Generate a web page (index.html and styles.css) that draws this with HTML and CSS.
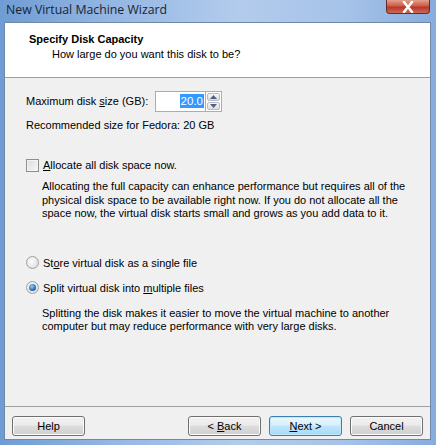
FILE: index.html
```html
<!DOCTYPE html>
<html>
<head>
<meta charset="utf-8">
<link rel="stylesheet" href="styles.css">
</head>
<body>
<div class="window">
  <div class="titlebar">
    <span class="title">New Virtual Machine Wizard</span>
    <span class="close"><svg width="16" height="12" viewBox="0 0 16 12"><path d="M4 1 L12 11 M12 1 L4 11" stroke="#fff" stroke-width="2.6" stroke-linecap="round"/></svg></span>
  </div>
  <div class="client">
    <div class="header">
      <div class="h-title">Specify Disk Capacity</div>
      <div class="h-sub">How large do you want this disk to be?</div>
    </div>
    <div class="content">
      <div class="size-row">
        <span class="label">Maximum disk <u>s</u>ize (GB):</span>
        <span class="spin">
          <span class="spin-input"><span class="sel">20.0</span></span>
          <span class="spin-btns">
            <span class="spin-btn"><svg width="7" height="4" viewBox="0 0 7 4"><path d="M0 4 L3.5 0 L7 4Z" fill="#4d6185"/></svg></span>
            <span class="spin-btn"><svg width="7" height="4" viewBox="0 0 7 4"><path d="M0 0 L3.5 4 L7 0Z" fill="#4d6185"/></svg></span>
          </span>
        </span>
      </div>
      <div class="rec">Recommended size for Fedora: 20 GB</div>
      <div class="option check-row">
        <span class="checkbox"></span>
        <span><u>A</u>llocate all disk space now.</span>
      </div>
      <p class="desc desc1">Allocating the full capacity can enhance performance but requires all of the physical disk space to be available right now. If you do not allocate all the space now, the virtual disk starts small and grows as you add data to it.</p>
      <div class="option radio-row r1">
        <span class="radio"></span>
        <span>St<u>o</u>re virtual disk as a single file</span>
      </div>
      <div class="option radio-row r2">
        <span class="radio on"><span class="dot"></span></span>
        <span>Split virtual disk into <u>m</u>ultiple files</span>
      </div>
      <p class="desc desc2">Splitting the disk makes it easier to move the virtual machine to another computer but may reduce performance with very large disks.</p>
    </div>
    <div class="footer">
      <button class="btn">Help</button>
      <span class="spacer"></span>
      <button class="btn">&lt; <u>B</u>ack</button>
      <button class="btn default"><u>N</u>ext &gt;</button>
      <button class="btn">Cancel</button>
    </div>
  </div>
</div>
</body>
</html>
```
FILE: styles.css
```css
* { box-sizing: border-box; }
html, body { margin: 0; padding: 0; }
body {
  width: 436px;
  height: 445px;
  overflow: hidden;
  font-family: "Liberation Sans", Arial, sans-serif;
  font-size: 11px;
  color: #000;
}
.window {
  width: 436px;
  height: 445px;
  display: flex;
  flex-direction: column;
  background: linear-gradient(to right, #6f9cd4 0%, #93b6e2 25%, #b3cced 55%, #a5c2e8 80%, #86acdd 100%);
}
.titlebar {
  height: 22px;
  display: flex;
  align-items: flex-start;
  padding-left: 6px;
}
.title {
  font-family: "Open Sans", "Noto Sans", sans-serif;
  font-size: 12.3px;
  line-height: 20px;
  color: #1a2433;
}
.close {
  margin-left: auto;
  margin-right: 6px;
  width: 44px;
  height: 14px;
  border: 1px solid #6a2a22;
  border-top: none;
  border-radius: 0 0 4px 4px;
  background: linear-gradient(to bottom, #e2a08e 0%, #cf5b47 45%, #b8362a 55%, #d06a52 100%);
  display: flex;
  align-items: center;
  justify-content: center;
}
.client {
  flex: 1;
  margin: 0 5px 5px 4px;
  border: 1px solid #6f8aa8;
  background: #f0f0f0;
  display: flex;
  flex-direction: column;
}
.header {
  height: 55px;
  background: #fff;
  border-bottom: 1px solid #a0a0a0;
  padding: 9px 0 0 24px;
}
.h-title {
  font-weight: bold;
  font-size: 11px;
  line-height: 14px;
}
.h-sub {
  padding-left: 23px;
  margin-top: 1px;
  line-height: 14px;
}
.content {
  flex: 1;
  padding: 12px 0 0 21px;
}
.size-row {
  display: flex;
  align-items: center;
  height: 22px;
}
.label { width: 129px; }
.spin {
  display: flex;
  height: 21px;
}
.spin-input {
  width: 50px;
  height: 21px;
  border: 1px solid #abadb3;
  border-right: none;
  background: #fff;
  display: flex;
  align-items: center;
  justify-content: flex-end;
  padding-right: 1px;
}
.sel {
  background: #3399ff;
  color: #fff;
  font-size: 11.5px;
  line-height: 14px;
  padding: 0 1px;
}
.spin-btns {
  width: 17px;
  height: 21px;
  border: 1px solid #abadb3;
  background: #fff;
  display: flex;
  flex-direction: column;
  padding: 1px;
  gap: 1px;
}
.spin-btn {
  flex: 1;
  border: 1px solid #b8bcc4;
  border-radius: 2px;
  background: linear-gradient(#f6f6f6, #dcdcdc);
  display: flex;
  align-items: center;
  justify-content: center;
}
.rec {
  margin-top: 6px;
  line-height: 14px;
}
.option {
  display: flex;
  align-items: center;
  gap: 4px;
  line-height: 14px;
}
.check-row { margin-top: 26px; }
.checkbox {
  width: 13px;
  height: 13px;
  border: 1px solid #8f8f8f;
  background: linear-gradient(135deg, #dcdcdc, #f8f8f8);
  box-shadow: inset 0 0 0 1px #f4f4f4;
}
.desc {
  margin: 8px 0 0 16px;
  line-height: 13.5px;
  width: 370px;
}
.r1 { margin-top: 35px; }
.r2 { margin-top: 11px; }
.radio {
  width: 13px;
  height: 13px;
  border-radius: 50%;
  border: 1px solid #a0a0a0;
  background: radial-gradient(circle at 40% 40%, #fdfdfd, #d6d6d6);
  display: flex;
  align-items: center;
  justify-content: center;
}
.dot {
  width: 7px;
  height: 7px;
  border-radius: 50%;
  background: radial-gradient(circle at 40% 35%, #8fd0f5, #1a5fa8 70%, #0e3f7a);
}
.desc2 { margin-top: 12px; }
.footer {
  height: 33px;
  border-top: 1px solid #a0a0a0;
  display: flex;
  align-items: flex-start;
  padding: 9px 7px 0 7px;
  gap: 8px;
}
.spacer { flex: 1; }
.btn {
  width: 73px;
  height: 20px;
  font-family: "Liberation Sans", Arial, sans-serif;
  font-size: 11px;
  border: 1px solid #707070;
  border-radius: 3px;
  background: linear-gradient(#f2f2f2 0%, #ebebeb 45%, #dddddd 50%, #cfcfcf 100%);
  box-shadow: inset 0 0 0 1px #fbfbfb;
  color: #000;
  padding: 0;
}
.btn.default {
  border-color: #3c7fb1;
  background: linear-gradient(#eaf6fd 0%, #d9f0fc 45%, #bee6fd 50%, #a7d9f5 100%);
  box-shadow: inset 0 0 0 1px #c0eafc;
}
```
